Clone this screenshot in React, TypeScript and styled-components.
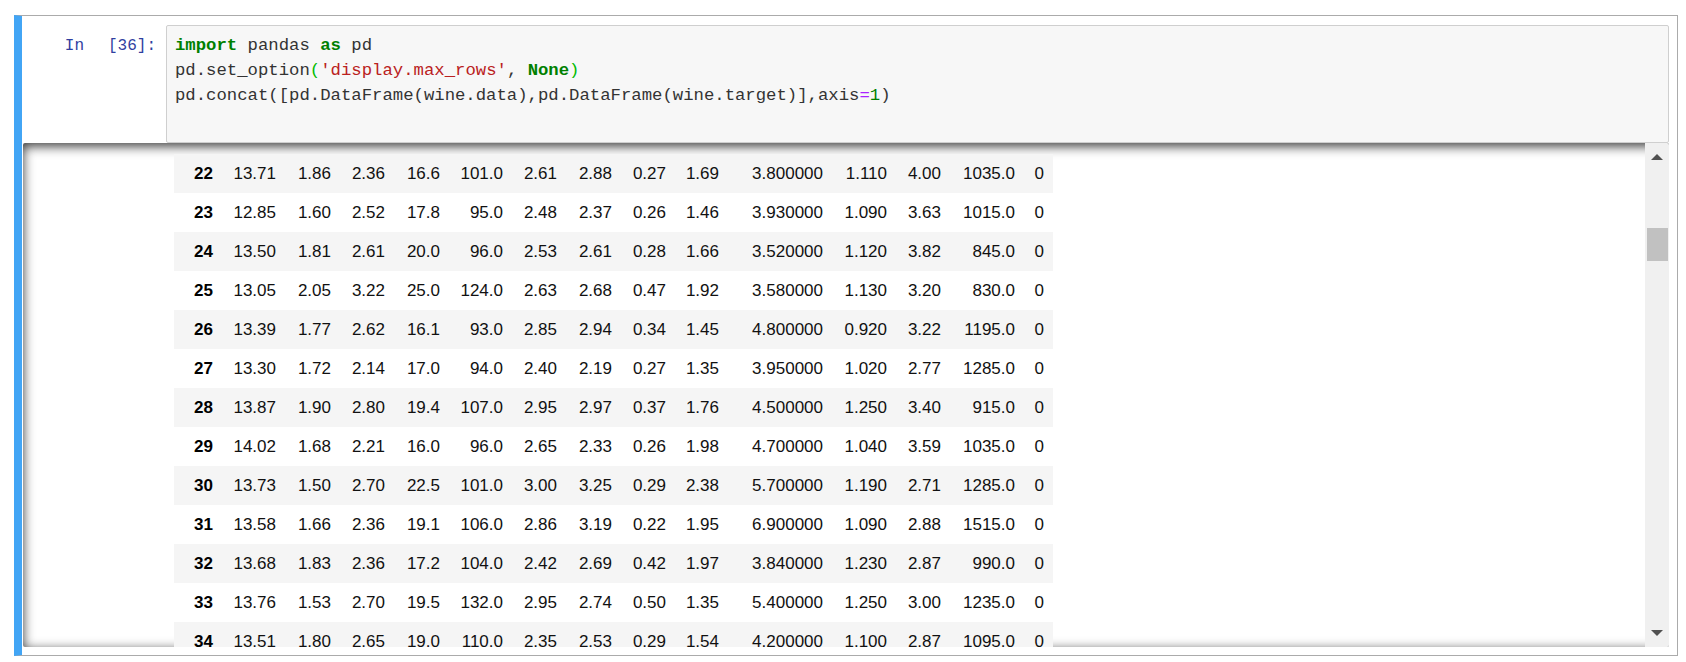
import styled, { createGlobalStyle } from "styled-components";

const GlobalStyle = createGlobalStyle`
    html, body {
        margin: 0;
        padding: 0;
        background: #ffffff;
    }
`;

const Page = styled.div`
    width: 1686px;
    height: 662px;
    padding: 15px 8px 0 14px;
    box-sizing: border-box;
    overflow: hidden;
`;

const Cell = styled.div`
    border: 1px solid #ababab;
    border-left: 8px solid #42a5f5;
    padding: 9px 8px 8px 1px;
    display: flex;
    flex-direction: column;
`;

const InputRow = styled.div`
    display: flex;
`;

const Prompt = styled.div`
    width: 143px;
    flex-shrink: 0;
    box-sizing: border-box;
    padding: 9px 10px 0 0;
    display: flex;
    justify-content: flex-end;
    gap: 24px;
    font-family: "Liberation Mono", monospace;
    font-size: 16px;
    line-height: 24.8px;
    color: #303f9f;
`;

const InputArea = styled.div`
    flex: 1;
    height: 118px;
    box-sizing: border-box;
    background: #f7f7f7;
    border: 1px solid #cfcfcf;
    border-radius: 2px;
    padding: 8px 8px;
    font-family: "Liberation Mono", monospace;
    font-size: 17.3px;
    line-height: 24.8px;
    color: #333333;
    white-space: pre;
`;

const CodeLine = styled.div`
    height: 24.8px;
`;

type TokenKind = "kw" | "str" | "match" | "op" | "num";

const tokenColors: Record<TokenKind, string> = {
    kw: "#008000",
    str: "#ba2121",
    match: "#00bb00",
    op: "#aa22ff",
    num: "#008000",
};

const Token = styled.span<{ $kind: TokenKind }>`
    color: ${(p) => tokenColors[p.$kind]};
    font-weight: ${(p) => (p.$kind === "kw" ? "bold" : "normal")};
`;

const OutputScroll = styled.div`
    height: 504px;
    display: flex;
    border-radius: 2px;
    box-shadow: inset 0 3px 12px rgba(0, 0, 0, 0.8);
    overflow: hidden;
`;

const Viewport = styled.div`
    flex: 1;
    overflow: hidden;
    display: flex;
    padding-top: 11px;
`;

const OutputPrompt = styled.div`
    width: 143px;
    flex-shrink: 0;
`;

const Subarea = styled.div`
    padding-left: 8px;
`;

const Table = styled.table`
    border-collapse: collapse;
    border-spacing: 0;
    table-layout: fixed;
    width: 879px;
    font-family: "Liberation Sans", Arial, sans-serif;
    font-size: 17px;
    color: #111111;

    tbody tr:nth-child(odd) {
        background: #f5f5f5;
    }
`;

const Col = styled.col<{ $w: number }>`
    width: ${(p) => p.$w}px;
`;

const IndexCell = styled.th`
    height: 39px;
    padding: 0 9px;
    text-align: right;
    font-weight: bold;
    color: #000000;
    vertical-align: middle;
    white-space: nowrap;
`;

const DataCell = styled.td`
    height: 39px;
    padding: 0 9px;
    text-align: right;
    vertical-align: middle;
    white-space: nowrap;
`;

const Scrollbar = styled.div`
    width: 24px;
    flex-shrink: 0;
    background: #f0f0f0;
    display: flex;
    flex-direction: column;
`;

const ArrowButton = styled.div`
    height: 28px;
    display: flex;
    align-items: center;
    justify-content: center;
`;

const Arrow = styled.div<{ $down?: boolean }>`
    width: 0;
    height: 0;
    border-left: 6px solid transparent;
    border-right: 6px solid transparent;
    ${(p) =>
        p.$down
            ? "border-top: 6px solid #505050;"
            : "border-bottom: 6px solid #505050;"}
`;

const Track = styled.div`
    flex: 1;
    display: flex;
    flex-direction: column;
    align-items: center;
`;

const Thumb = styled.div`
    width: 21px;
    height: 33px;
    margin-top: 57px;
    margin-left: 1px;
    background: #c1c1c1;
`;

const colWidths = [48, 63, 55, 54, 55, 63, 54, 55, 54, 53, 104, 64, 54, 74, 29];

const rows: [number, string[]][] = [
    [22, ["13.71", "1.86", "2.36", "16.6", "101.0", "2.61", "2.88", "0.27", "1.69", "3.800000", "1.110", "4.00", "1035.0", "0"]],
    [23, ["12.85", "1.60", "2.52", "17.8", "95.0", "2.48", "2.37", "0.26", "1.46", "3.930000", "1.090", "3.63", "1015.0", "0"]],
    [24, ["13.50", "1.81", "2.61", "20.0", "96.0", "2.53", "2.61", "0.28", "1.66", "3.520000", "1.120", "3.82", "845.0", "0"]],
    [25, ["13.05", "2.05", "3.22", "25.0", "124.0", "2.63", "2.68", "0.47", "1.92", "3.580000", "1.130", "3.20", "830.0", "0"]],
    [26, ["13.39", "1.77", "2.62", "16.1", "93.0", "2.85", "2.94", "0.34", "1.45", "4.800000", "0.920", "3.22", "1195.0", "0"]],
    [27, ["13.30", "1.72", "2.14", "17.0", "94.0", "2.40", "2.19", "0.27", "1.35", "3.950000", "1.020", "2.77", "1285.0", "0"]],
    [28, ["13.87", "1.90", "2.80", "19.4", "107.0", "2.95", "2.97", "0.37", "1.76", "4.500000", "1.250", "3.40", "915.0", "0"]],
    [29, ["14.02", "1.68", "2.21", "16.0", "96.0", "2.65", "2.33", "0.26", "1.98", "4.700000", "1.040", "3.59", "1035.0", "0"]],
    [30, ["13.73", "1.50", "2.70", "22.5", "101.0", "3.00", "3.25", "0.29", "2.38", "5.700000", "1.190", "2.71", "1285.0", "0"]],
    [31, ["13.58", "1.66", "2.36", "19.1", "106.0", "2.86", "3.19", "0.22", "1.95", "6.900000", "1.090", "2.88", "1515.0", "0"]],
    [32, ["13.68", "1.83", "2.36", "17.2", "104.0", "2.42", "2.69", "0.42", "1.97", "3.840000", "1.230", "2.87", "990.0", "0"]],
    [33, ["13.76", "1.53", "2.70", "19.5", "132.0", "2.95", "2.74", "0.50", "1.35", "5.400000", "1.250", "3.00", "1235.0", "0"]],
    [34, ["13.51", "1.80", "2.65", "19.0", "110.0", "2.35", "2.53", "0.29", "1.54", "4.200000", "1.100", "2.87", "1095.0", "0"]],
];

export default function App() {
    return (
        <Page>
            <GlobalStyle />
            <Cell>
                <InputRow>
                    <Prompt>
                        <span>In</span>
                        <span>[36]:</span>
                    </Prompt>
                    <InputArea>
                        <CodeLine>
                            <Token $kind="kw">import</Token> pandas <Token $kind="kw">as</Token> pd
                        </CodeLine>
                        <CodeLine>
                            pd.set_option<Token $kind="match">(</Token>
                            <Token $kind="str">'display.max_rows'</Token>, <Token $kind="kw">None</Token>
                            <Token $kind="match">)</Token>
                        </CodeLine>
                        <CodeLine>
                            pd.concat([pd.DataFrame(wine.data),pd.DataFrame(wine.target)],axis
                            <Token $kind="op">=</Token>
                            <Token $kind="num">1</Token>)
                        </CodeLine>
                    </InputArea>
                </InputRow>

                <OutputScroll>
                    <Viewport>
                        <OutputPrompt />
                        <Subarea>
                            <Table>
                                <colgroup>
                                    {colWidths.map((w, i) => (
                                        <Col key={i} $w={w} />
                                    ))}
                                </colgroup>
                                <tbody>
                                    {rows.map(([idx, values]) => (
                                        <tr key={idx}>
                                            <IndexCell>{idx}</IndexCell>
                                            {values.map((v, i) => (
                                                <DataCell key={i}>{v}</DataCell>
                                            ))}
                                        </tr>
                                    ))}
                                </tbody>
                            </Table>
                        </Subarea>
                    </Viewport>
                    <Scrollbar>
                        <ArrowButton>
                            <Arrow />
                        </ArrowButton>
                        <Track>
                            <Thumb />
                        </Track>
                        <ArrowButton>
                            <Arrow $down />
                        </ArrowButton>
                    </Scrollbar>
                </OutputScroll>
            </Cell>
        </Page>
    );
}
